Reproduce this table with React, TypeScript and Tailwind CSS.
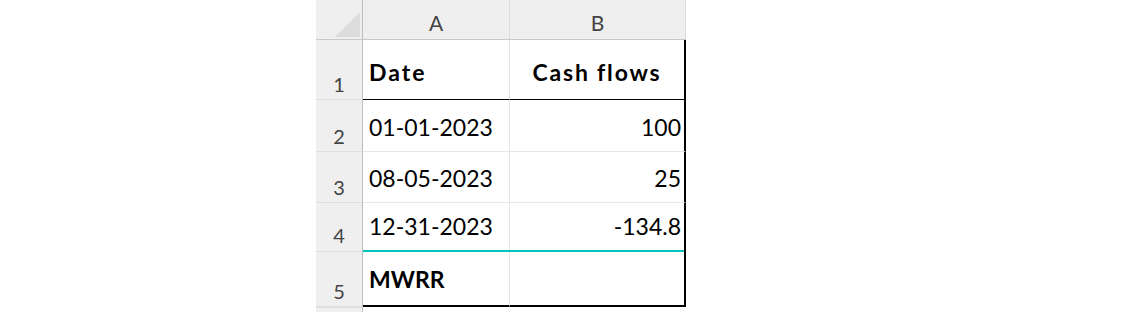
import React from "react";

const F = { fontFamily: "Lato, 'Noto Sans', sans-serif" };

function RowHead({ n, h, last }: { n?: string; h: string; last?: boolean }) {
  return (
    <div
      className={`w-[47px] shrink-0 bg-[#efefef] border-r border-r-[#bcbcbc] ${last ? "" : "border-b border-b-[#dedede]"} flex items-end justify-center pb-[5px] text-[20px] leading-none text-[#444444] ${h}`}
    >
      {n}
    </div>
  );
}

export default function App() {
  return (
    <div className="w-[1145px] h-[312px] bg-white overflow-hidden" style={F}>
      <div className="ml-[316px] w-[370px] flex flex-col">
        {/* header */}
        <div className="flex h-[40px] bg-[#efefef] border-b border-b-[#c8c8c8]">
          <div className="w-[47px] shrink-0 border-r border-r-[#bcbcbc] relative">
            <svg className="absolute left-[19px] top-[12px]" width="25" height="25" viewBox="0 0 25 25">
              <polygon points="25,0 25,25 0,25" fill="#dcdcdc" />
            </svg>
          </div>
          <div className="w-[147px] shrink-0 border-r border-r-[#dcdcdc] flex items-end justify-center pb-[6px] text-[21px] leading-none text-[#444444]">
            A
          </div>
          <div className="w-[176px] shrink-0 border-r border-r-[#dcdcdc] flex items-end justify-center pb-[6px] text-[21px] leading-none text-[#444444]">
            B
          </div>
        </div>
        {/* row 1 */}
        <div className="flex">
          <RowHead n="1" h="h-[60px]" />
          <div className="w-[147px] shrink-0 h-[60px] border-r border-r-[#e6e6e6] border-b border-b-black flex items-end pl-[6px] pb-[15px] text-[23px] leading-none font-bold tracking-[2px] text-black">
            Date
          </div>
          <div className="w-[176px] shrink-0 h-[60px] border-r-2 border-r-black border-b border-b-black flex items-end justify-center pb-[15px] text-[23px] leading-none font-bold tracking-[1.8px] text-black">
            Cash flows
          </div>
        </div>
        {[
          { n: "2", d: "01-01-2023", v: "100", h: "h-[52px]", b: "border-b border-b-[#e6e6e6]" },
          { n: "3", d: "08-05-2023", v: "25", h: "h-[51px]", b: "border-b border-b-[#e6e6e6]" },
          { n: "4", d: "12-31-2023", v: "-134.8", h: "h-[47px]", b: "" },
        ].map((r) => (
          <div className="flex" key={r.n}>
            <RowHead n={r.n} h={r.h} last={r.n === "4"} />
            <div className={`w-[147px] shrink-0 ${r.h} ${r.b} border-r border-r-[#e6e6e6] flex items-end pl-[6px] pb-[12px] text-[23px] leading-none text-black`}>
              {r.d}
            </div>
            <div className={`w-[176px] shrink-0 ${r.h} ${r.b} border-r-2 border-r-black flex items-end justify-end pr-[3px] pb-[12px] text-[23px] leading-none text-black`}>
              {r.v}
            </div>
          </div>
        ))}
        {/* teal selection line under row 4 */}
        <div className="flex h-[2px]">
          <div className="w-[47px] shrink-0 bg-[#efefef] border-r border-r-[#bcbcbc] border-b border-b-[#dedede]" />
          <div className="w-[321px] shrink-0 bg-[#00c4bc]" />
          <div className="w-[2px] shrink-0 bg-black" />
        </div>
        {/* row 5 */}
        <div className="flex">
          <RowHead n="5" h="h-[55px]" />
          <div className="w-[147px] shrink-0 h-[55px] border-b-2 border-b-black border-r border-r-[#e6e6e6] flex items-end pl-[6px] pb-[14px] text-[23px] leading-none font-bold text-black">
            MWRR
          </div>
          <div className="w-[176px] shrink-0 h-[55px] border-b-2 border-b-black border-r-2 border-r-black" />
        </div>
        <div className="flex">
          <div className="w-[47px] h-[10px] shrink-0 bg-[#efefef] border-r border-r-[#bcbcbc] border-t border-t-[#dedede]" />
        </div>
      </div>
    </div>
  );
}
